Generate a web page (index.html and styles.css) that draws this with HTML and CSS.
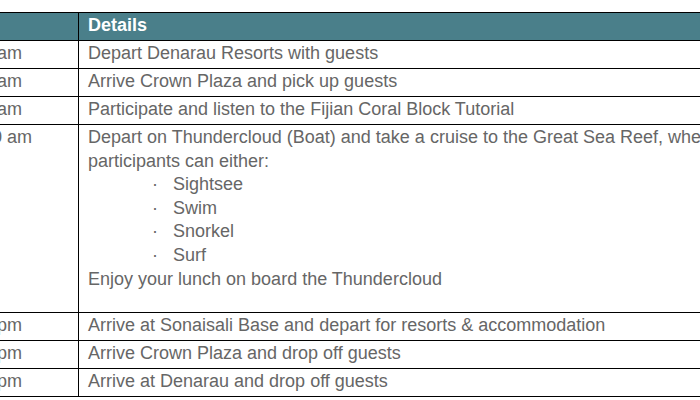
FILE: index.html
```
<!DOCTYPE html>
<html>
<head>
<meta charset="utf-8">
<link rel="stylesheet" href="styles.css">
</head>
<body>
<div class="wrap">
<table class="itinerary">
  <colgroup><col class="c-time"><col class="c-details"></colgroup>
  <thead>
    <tr><th>Time</th><th>Details</th></tr>
  </thead>
  <tbody>
    <tr><td>7:30 am</td><td>Depart Denarau Resorts with guests</td></tr>
    <tr><td>8:00 am</td><td>Arrive Crown Plaza and pick up guests</td></tr>
    <tr><td>9:00 am</td><td>Participate and listen to the Fijian Coral Block Tutorial</td></tr>
    <tr>
      <td>10:00 am</td>
      <td>
        <div>Depart on Thundercloud (Boat) and take a cruise to the Great Sea Reef, where participants can either:</div>
        <div class="item"><span class="dot">·</span>Sightsee</div>
        <div class="item"><span class="dot">·</span>Swim</div>
        <div class="item"><span class="dot">·</span>Snorkel</div>
        <div class="item"><span class="dot">·</span>Surf</div>
        <div>Enjoy your lunch on board the Thundercloud</div>
        <div class="blank"></div>
      </td>
    </tr>
    <tr><td>3:30 pm</td><td>Arrive at Sonaisali Base and depart for resorts &amp; accommodation</td></tr>
    <tr><td>4:30 pm</td><td>Arrive Crown Plaza and drop off guests</td></tr>
    <tr><td>5:00 pm</td><td>Arrive at Denarau and drop off guests</td></tr>
  </tbody>
</table>
</div>
</body>
</html>
```
FILE: styles.css
```
html, body {
  margin: 0;
  padding: 0;
  overflow: hidden;
  background: #ffffff;
}
body {
  font-family: "Liberation Sans", Arial, sans-serif;
  font-size: 18px;
  color: #666666;
}
.wrap {
  padding-top: 12px;
  margin-left: -53px;
}
.itinerary {
  border-collapse: collapse;
  table-layout: fixed;
  width: 791px;
}
.c-time { width: 131px; }
.c-details { width: 660px; }
.itinerary th,
.itinerary td {
  border: 1px solid #000000;
  padding: 1px 9px 2.4px 9px;
  line-height: 23.6px;
  text-align: left;
  vertical-align: top;
}
.itinerary th {
  background: #4a7f8a;
  color: #ffffff;
  font-weight: bold;
}
.item {
  display: flex;
  padding-left: 64px;
}
.dot {
  width: 21px;
  flex: none;
}
.blank {
  height: 18.4px;
}
```
